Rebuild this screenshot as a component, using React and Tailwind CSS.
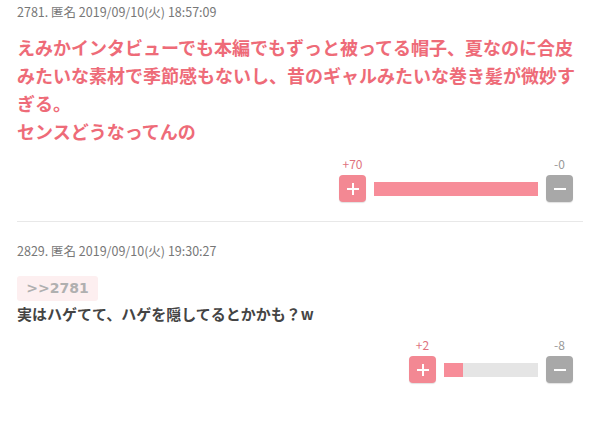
import React from "react";

const FONT = "font-['Noto_Sans_CJK_JP','Noto_Sans',sans-serif]";

function PlusIcon() {
  return (
    <svg width="14" height="14" viewBox="0 0 14 14">
      <path d="M7 1v12M1 7h12" stroke="white" strokeWidth="2" />
    </svg>
  );
}

function MinusIcon() {
  return (
    <svg width="14" height="14" viewBox="0 0 14 14">
      <path d="M1 7h12" stroke="white" strokeWidth="2" />
    </svg>
  );
}

// 評価バー（+ / - ボタンと割合）
function Vote({ plus, minus, barWidth }) {
  const total = plus + minus;
  const ratio = total === 0 ? 0 : (plus / total) * 100;
  return (
    <div className="flex justify-end pr-[10px]">
      <div className="flex flex-col">
        <div className="flex justify-between text-[12px] leading-[14px]">
          <span className="w-[27px] text-center text-[#e0737e]">+{plus}</span>
          <span className="w-[27px] text-center text-[#999]">-{minus}</span>
        </div>
        <div className="mt-[4px] flex items-center">
          <button className="flex h-[27px] w-[27px] items-center justify-center rounded-[4px] bg-[#f38893] shadow-[0_1px_1px_rgba(0,0,0,0.12)]">
            <PlusIcon />
          </button>
          <div className="mx-[8px] h-[14px] bg-[#e5e5e5]" style={{ width: barWidth }}>
            <div className="h-full bg-[#f78d99]" style={{ width: `${ratio}%` }} />
          </div>
          <button className="flex h-[27px] w-[27px] items-center justify-center rounded-[4px] bg-[#a8a8a8] shadow-[0_1px_1px_rgba(0,0,0,0.12)]">
            <MinusIcon />
          </button>
        </div>
      </div>
    </div>
  );
}

export default function App() {
  return (
    <div className={`h-[423px] w-[600px] overflow-hidden bg-white ${FONT}`}>
      <div className="ml-[17px] w-[566px] pt-[4px]">
        {/* コメント 2781 */}
        <div className="pb-[19px]">
          <div className="text-[12.5px] leading-[16px] text-[#777]">
            2781. 匿名 2019/09/10(火) 18:57:09
          </div>
          <div className="mt-[13px] text-[18px] font-bold leading-[28px] text-[#ee6b78]">
            えみかインタビューでも本編でもずっと被ってる帽子、夏なのに合皮
            <br />
            みたいな素材で季節感もないし、昔のギャルみたいな巻き髪が微妙す
            <br />
            ぎる。
            <br />
            センスどうなってんの
          </div>
          <div className="mt-[12px]">
            <Vote plus={70} minus={0} barWidth={164} />
          </div>
        </div>

        <div className="h-px bg-[#e8e8e8]" />

        {/* コメント 2829 */}
        <div className="pt-[21px]">
          <div className="text-[12.5px] leading-[16px] text-[#777]">
            2829. 匿名 2019/09/10(火) 19:30:27
          </div>
          <div className="mt-[17px] flex h-[25px] w-[81px] items-center justify-center rounded-[3px] bg-[#fdeff0] font-['DejaVu_Sans',sans-serif] text-[14px] font-bold text-[#b0b0b0]">
            &gt;&gt;2781
          </div>
          <div className="mt-[2px] text-[15px] font-bold leading-[22px] text-[#444]">
            実はハゲてて、ハゲを隠してるとかかも？w
          </div>
          <div className="mt-[13px]">
            <Vote plus={2} minus={8} barWidth={94} />
          </div>
        </div>
      </div>
    </div>
  );
}
